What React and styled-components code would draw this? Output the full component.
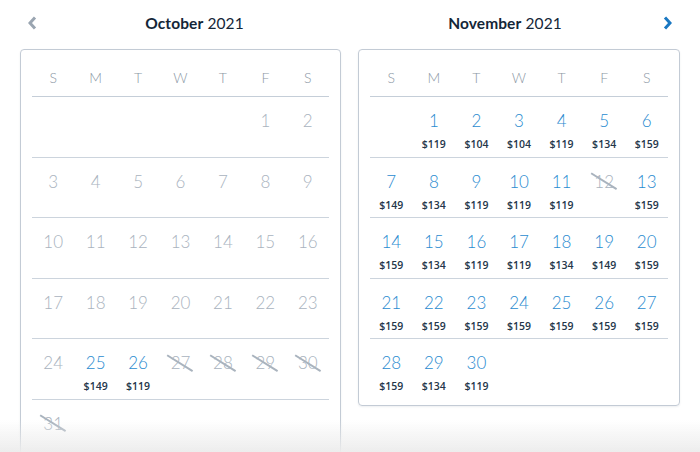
import React from "react";
import styled, { createGlobalStyle, css } from "styled-components";

const GlobalStyle = createGlobalStyle`
  html, body {
    margin: 0;
    padding: 0;
    background: #ffffff;
    font-family: "Lato", "Open Sans", sans-serif;
  }
  body {
    height: 452px;
    overflow: hidden;
  }
`;

const Page = styled.div`
  display: grid;
  grid-template-columns: 321px 322px;
  column-gap: 17px;
  padding: 0 20px;
  height: 452px;
  overflow: hidden;
`;

const Month = styled.section`
  display: flex;
  flex-direction: column;
`;

const MonthHeader = styled.header`
  display: flex;
  align-items: center;
  flex-direction: ${(p) => (p.$side === "right" ? "row-reverse" : "row")};
  height: 46px;
  margin-bottom: 3px;
`;

const NavButton = styled.button`
  width: 20px;
  height: 20px;
  padding: 0;
  margin: 0 ${(p) => (p.$side === "right" ? "8px" : "0")} 0
    ${(p) => (p.$side === "left" ? "8px" : "0")};
  border: 0;
  background: none;
  display: flex;
  align-items: center;
  justify-content: ${(p) => (p.$side === "left" ? "flex-start" : "flex-end")};
  color: ${(p) => (p.$active ? "#1a78c2" : "#9aa5b1")};
  cursor: pointer;
`;

const Title = styled.h2`
  flex: 1;
  margin: 0;
  text-align: center;
  font-size: 15.5px;
  font-weight: 400;
  color: #142638;
  letter-spacing: 0.1px;

  strong {
    font-weight: 700;
  }
`;

const Panel = styled.div`
  border: 1px solid #c3cbd5;
  border-radius: 4px;
  padding: 0 11px 5px;
  box-shadow: 0 1px 2px rgba(30, 50, 80, 0.08);
`;

const WeekRow = styled.div`
  display: grid;
  grid-template-columns: repeat(7, 1fr);
  height: 46px;
  border-bottom: 1px solid #c5ced8;
  align-items: center;
`;

const WeekDay = styled.span`
  text-align: center;
  font-size: 14px;
  font-weight: 300;
  color: #8b97a4;
  padding-top: 9px;
`;

const DaysGrid = styled.div`
  display: grid;
  grid-template-columns: repeat(7, 1fr);
  grid-auto-rows: 60.6px;
`;

const Cell = styled.div`
  display: flex;
  flex-direction: column;
  align-items: center;
  padding-top: 13px;
  box-sizing: border-box;
  border-bottom: ${(p) => (p.$last ? "none" : "1px solid #ccd4dd")};
`;

const DayNum = styled.span`
  position: relative;
  font-size: 17px;
  font-weight: 300;
  line-height: 21px;
  color: ${(p) => (p.$available ? "#2a8bd0" : "#a9b3be")};

  ${(p) =>
    p.$struck &&
    css`
      &::after {
        content: "";
        position: absolute;
        left: 50%;
        top: 50%;
        width: 30px;
        height: 1.5px;
        background: #a9b3be;
        transform: translate(-50%, -50%) rotate(32deg);
      }
    `}
`;

const Price = styled.span`
  margin-top: 6px;
  font-family: "Open Sans", "Lato", sans-serif;
  font-size: 10.5px;
  font-weight: 600;
  color: #24364a;
`;

const Fade = styled.div`
  position: fixed;
  left: 0;
  right: 0;
  bottom: 0;
  height: 32px;
  background: linear-gradient(rgba(236, 236, 236, 0), rgba(236, 236, 236, 0.95));
  pointer-events: none;
`;

const Chevron = ({ dir }) => (
  <svg width="9" height="14" viewBox="0 0 9 14" aria-hidden="true">
    <polyline
      points={dir === "left" ? "7,1.5 2,7 7,12.5" : "2,1.5 7,7 2,12.5"}
      fill="none"
      stroke="currentColor"
      strokeWidth="3"
    />
  </svg>
);

const WEEKDAYS = ["S", "M", "T", "W", "T", "F", "S"];

const october = {
  name: "October",
  year: 2021,
  offset: 5,
  days: Array.from({ length: 31 }, (_, i) => {
    const d = i + 1;
    if (d === 25) return { d, price: 149 };
    if (d === 26) return { d, price: 119 };
    if (d >= 27) return { d, struck: true };
    return { d, past: true };
  }),
};

const novPrices = [
  119, 104, 104, 119, 134, 159,
  149, 134, 119, 119, 119, null, 159,
  159, 134, 119, 119, 134, 149, 159,
  159, 159, 159, 159, 159, 159, 159,
  159, 134, 119,
];

const november = {
  name: "November",
  year: 2021,
  offset: 1,
  days: novPrices.map((price, i) =>
    price ? { d: i + 1, price } : { d: i + 1, struck: true }
  ),
};

function Calendar({ month, side }) {
  const cells = [...Array(month.offset).fill(null), ...month.days];
  const rows = Math.ceil(cells.length / 7);
  const lastRowStart = (rows - 1) * 7;

  return (
    <Month>
      <MonthHeader $side={side}>
        <NavButton $side={side} $active={side === "right"}>
          <Chevron dir={side} />
        </NavButton>
        <Title>
          <strong>{month.name}</strong> {month.year}
        </Title>
      </MonthHeader>
      <Panel>
        <WeekRow>
          {WEEKDAYS.map((w, i) => (
            <WeekDay key={i}>{w}</WeekDay>
          ))}
        </WeekRow>
        <DaysGrid>
          {cells.map((c, i) => {
            const last = side === "right" && i >= lastRowStart;
            if (!c) return <Cell key={i} $last={last} />;
            return (
              <Cell key={i} $last={last}>
                <DayNum $available={!!c.price} $struck={c.struck}>
                  {c.d}
                </DayNum>
                {c.price && <Price>${c.price}</Price>}
              </Cell>
            );
          })}
        </DaysGrid>
      </Panel>
    </Month>
  );
}

export default function App() {
  return (
    <>
      <GlobalStyle />
      <Page>
        <Calendar month={october} side="left" />
        <Calendar month={november} side="right" />
      </Page>
      <Fade />
    </>
  );
}
